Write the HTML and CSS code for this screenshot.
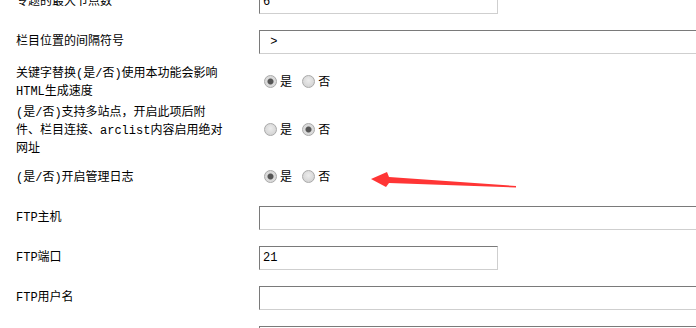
FILE: index.html
```html
<!DOCTYPE html>
<html>
<head>
    <meta charset="UTF-8">
    <title>系统基本参数</title>
    <link rel="stylesheet" href="styles.css">
</head>
<body>
    <div class="config-form">
        <div class="row">
            <div class="label">专题的最大节点数</div>
            <div class="field"><input class="text-input short" type="text" value="6"></div>
        </div>
        <div class="row">
            <div class="label">栏目位置的间隔符号</div>
            <div class="field"><input class="text-input long" type="text" value=" > "></div>
        </div>
        <div class="row row-pad">
            <div class="label">关键字替换(是/否)使用本功能会影响<br>HTML生成速度</div>
            <div class="field">
                <label class="opt"><input class="radio" type="radio" name="keyword" checked>是</label>
                <label class="opt"><input class="radio" type="radio" name="keyword">否</label>
            </div>
        </div>
        <div class="row">
            <div class="label">(是/否)支持多站点，开启此项后附<br>件、栏目连接、arclist内容启用绝对<br>网址</div>
            <div class="field">
                <label class="opt"><input class="radio" type="radio" name="multisite">是</label>
                <label class="opt"><input class="radio" type="radio" name="multisite" checked>否</label>
            </div>
        </div>
        <div class="row">
            <div class="label">(是/否)开启管理日志</div>
            <div class="field">
                <label class="opt"><input class="radio" type="radio" name="adminlog" checked>是</label>
                <label class="opt"><input class="radio" type="radio" name="adminlog">否</label>
            </div>
        </div>
        <div class="row">
            <div class="label">FTP主机</div>
            <div class="field"><input class="text-input long" type="text" value=""></div>
        </div>
        <div class="row">
            <div class="label">FTP端口</div>
            <div class="field"><input class="text-input short" type="text" value="21"></div>
        </div>
        <div class="row">
            <div class="label">FTP用户名</div>
            <div class="field"><input class="text-input long" type="text" value=""></div>
        </div>
        <div class="row">
            <div class="label">FTP密码</div>
            <div class="field"><input class="text-input long" type="text" value=""></div>
        </div>
    </div>

    <!-- 标注箭头 -->
    <svg class="arrow" width="150" height="24" viewBox="0 0 150 24">
        <polygon points="2,11 18,4 20,9 147,18 147,19.5 20,15 17,19" fill="#ff3535"/>
    </svg>
</body>
</html>
```

FILE: styles.css
```css
html, body {
    overflow: hidden;
}

body {
    margin: 0;
    padding: 0;
    background-color: #fff;
    color: #000;
    font-family: "Liberation Mono", "Noto Sans CJK SC", monospace;
    font-size: 12px;
}

.config-form {
    margin-top: -18px;
    padding-left: 16px;
}

.row {
    display: grid;
    grid-template-columns: 243px 1fr;
    align-items: center;
    min-height: 40px;
    box-sizing: border-box;
}

.row-pad {
    padding: 3px 0;
}

.label {
    line-height: 18px;
    white-space: nowrap;
}

.field {
    white-space: nowrap;
    line-height: 18px;
}

.text-input {
    display: block;
    height: 24px;
    box-sizing: border-box;
    margin: 0;
    padding: 0 3px;
    border: 1px solid;
    border-color: #7a7a7a #cfcfcf #cfcfcf #7a7a7a;
    font-family: "Liberation Mono", "Noto Sans CJK SC", monospace;
    font-size: 12px;
    color: #000;
    outline: none;
}

.text-input.short {
    width: 239px;
}

.text-input.long {
    width: 480px;
}

.opt {
    display: inline-block;
    margin-right: -2px;
}

.radio {
    appearance: none;
    -webkit-appearance: none;
    width: 13px;
    height: 13px;
    margin: 0 3px 0 5px;
    vertical-align: -2px;
    border: 1px solid #a9a9a9;
    border-radius: 50%;
    box-sizing: border-box;
    background: radial-gradient(circle at 50% 40%, #ececec 0, #d6d6d6 6px);
}

.radio:checked {
    background: radial-gradient(circle, #555 0 2.5px, #dadada 3.5px);
}

.arrow {
    position: absolute;
    left: 369px;
    top: 168px;
}
```
